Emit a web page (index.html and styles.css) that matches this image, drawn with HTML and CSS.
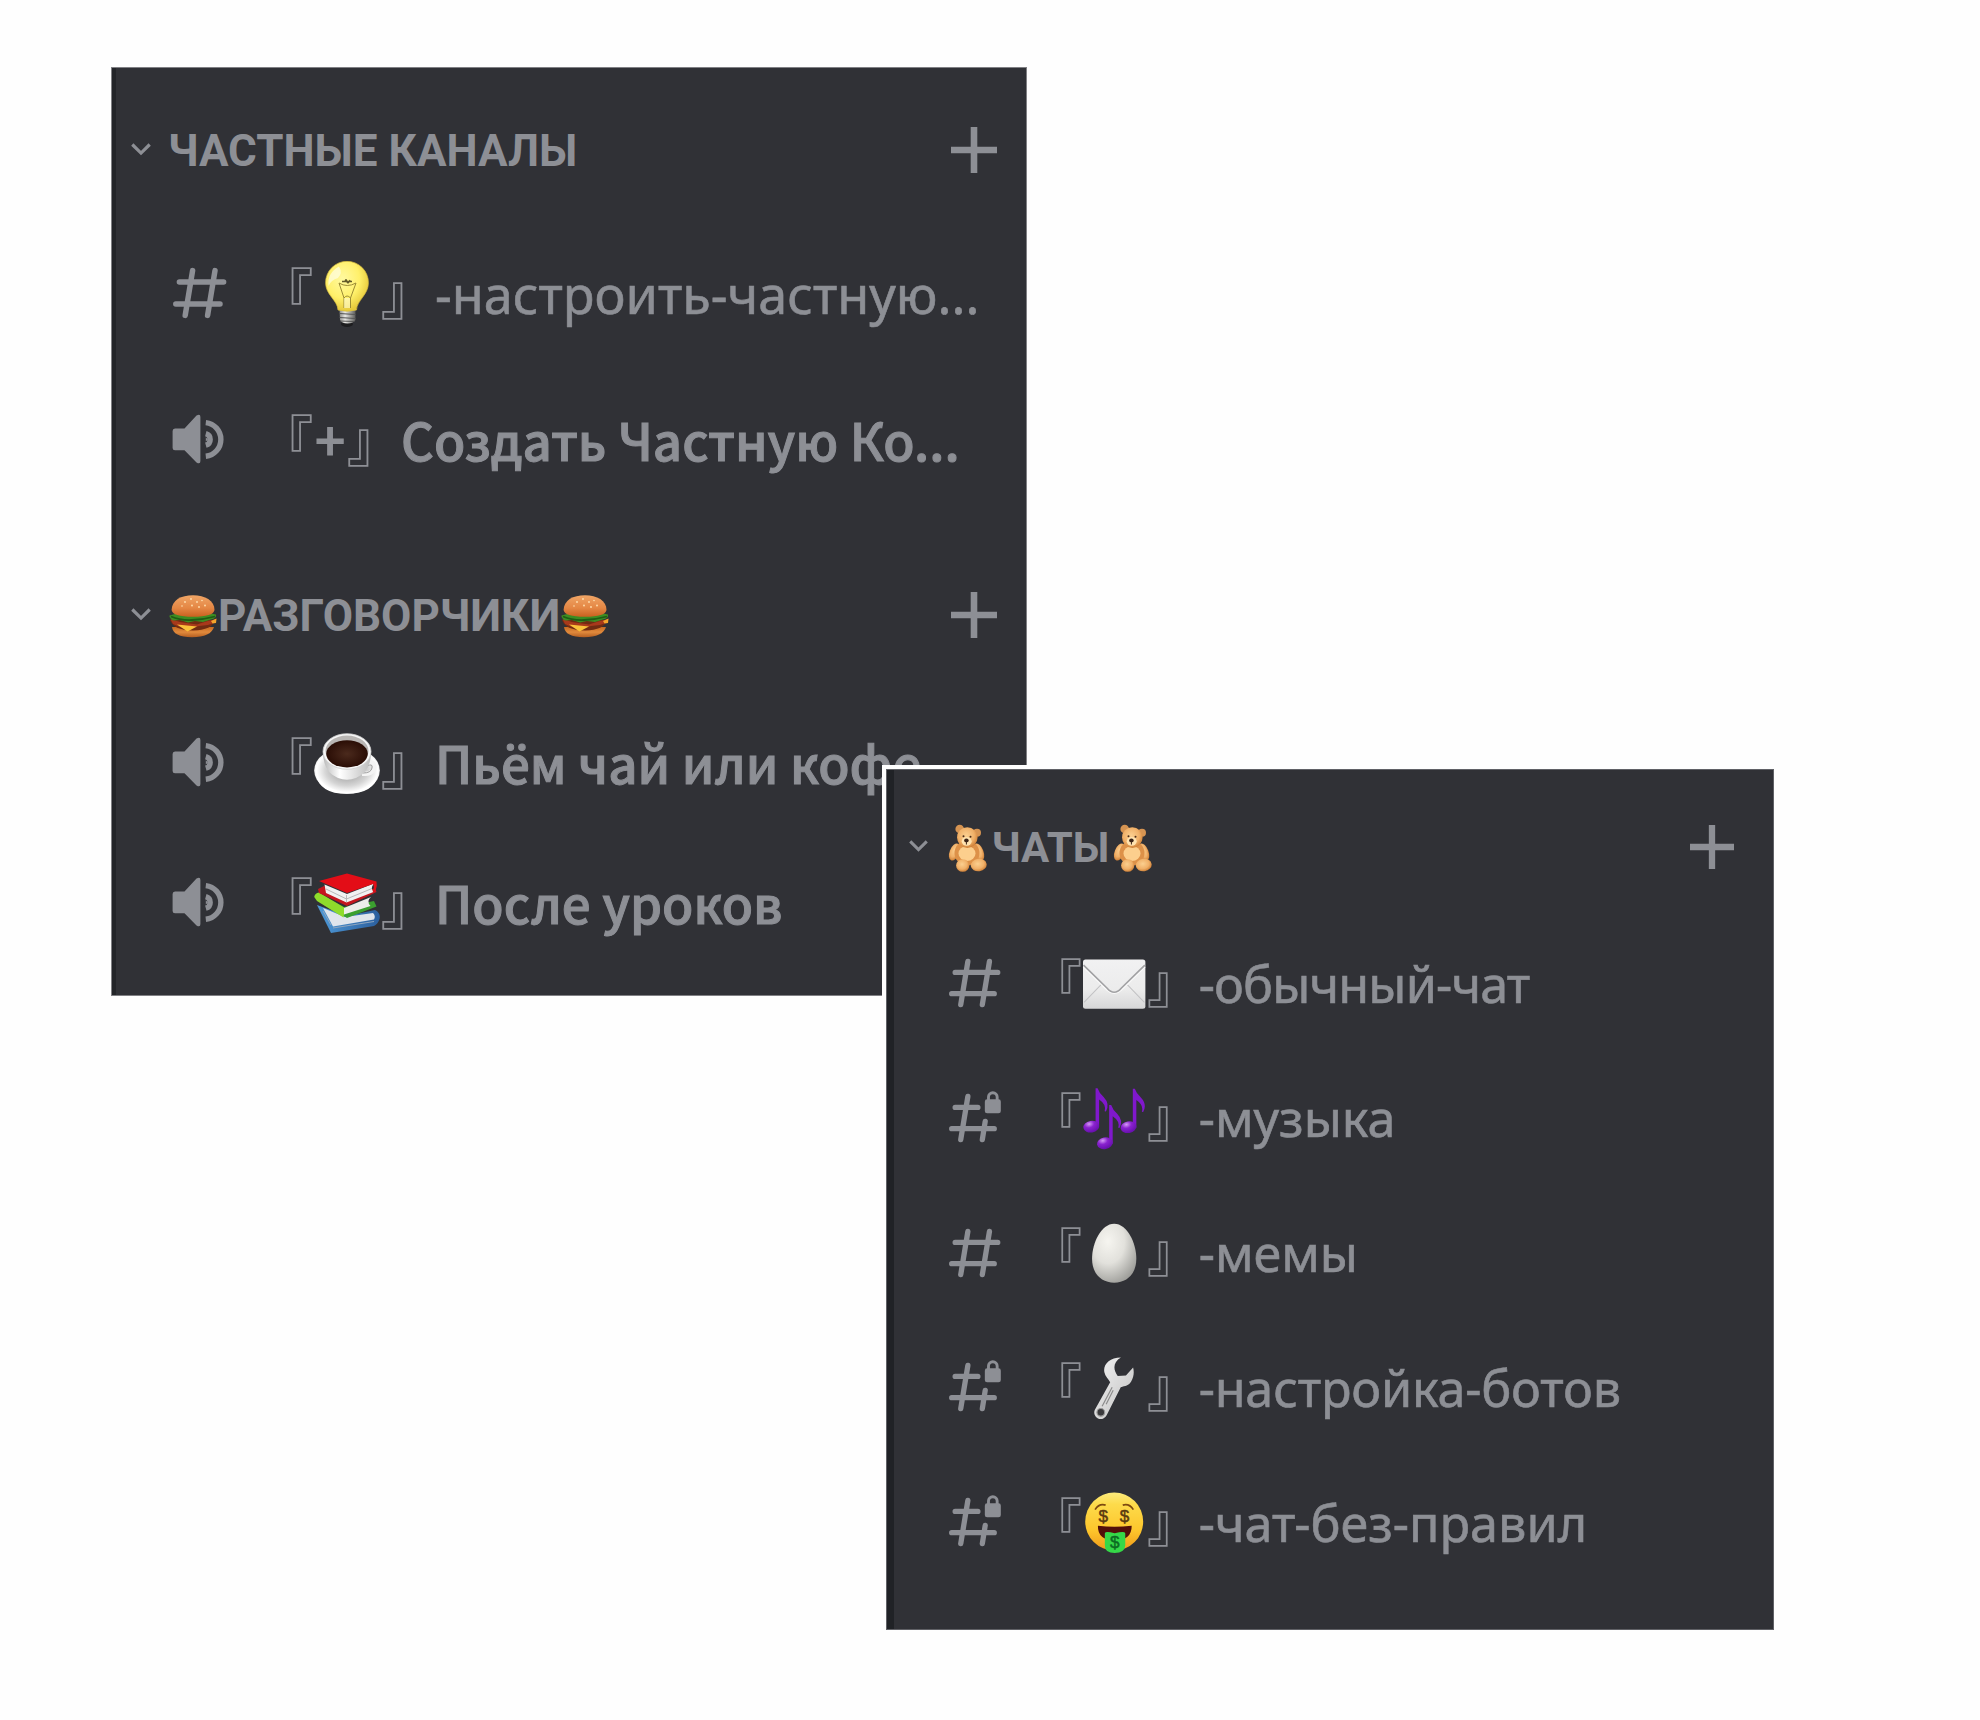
FILE: index.html
```html
<!DOCTYPE html>
<html lang="ru">
<head>
<meta charset="utf-8">
<title>Каналы</title>
<link rel="stylesheet" href="styles.css">
</head>
<body>
<svg class="defs" width="0" height="0" aria-hidden="true">
  <defs>
    <linearGradient id="bun" x1="0" y1="0" x2="0" y2="1"><stop offset="0" stop-color="#f0a566"/><stop offset=".6" stop-color="#e48643"/><stop offset="1" stop-color="#c9601f"/></linearGradient>
    <linearGradient id="bun2" x1="0" y1="0" x2="0" y2="1"><stop offset="0" stop-color="#c76a22"/><stop offset=".5" stop-color="#e08a3c"/><stop offset="1" stop-color="#b45d20"/></linearGradient>
    <radialGradient id="fur" cx=".45" cy=".4" r=".6"><stop offset="0" stop-color="#fbcf8f"/><stop offset=".65" stop-color="#f0b068"/><stop offset="1" stop-color="#cf8138"/></radialGradient>
    <radialGradient id="glass" cx=".4" cy=".35" r=".65"><stop offset="0" stop-color="#fff9a0"/><stop offset=".6" stop-color="#fff06a"/><stop offset="1" stop-color="#e6c93a"/></radialGradient>
    <linearGradient id="metal" x1="0" x2="1"><stop offset="0" stop-color="#8b8b88"/><stop offset=".35" stop-color="#e9e9e6"/><stop offset="1" stop-color="#5c5c5a"/></linearGradient>
    <radialGradient id="saucer" cx=".5" cy=".5" r=".55"><stop offset="0" stop-color="#8f8f8f"/><stop offset=".6" stop-color="#d5d5d5"/><stop offset=".85" stop-color="#fff"/><stop offset="1" stop-color="#d9d9d9"/></radialGradient>
    <linearGradient id="cup" x1="0" x2="1"><stop offset="0" stop-color="#b9b9b9"/><stop offset=".35" stop-color="#fff"/><stop offset="1" stop-color="#bcbcbc"/></linearGradient>
    <radialGradient id="brew"><stop offset="0" stop-color="#4b2a1d"/><stop offset="1" stop-color="#2a0d05"/></radialGradient>
    <linearGradient id="paper" x1="0" y1="0" x2="0" y2="1"><stop offset="0" stop-color="#f1f1f2"/><stop offset=".6" stop-color="#ececec"/><stop offset="1" stop-color="#d6d6d7"/></linearGradient>
    <radialGradient id="note" cx=".4" cy=".25" r=".7"><stop offset="0" stop-color="#d59af5"/><stop offset=".45" stop-color="#8a22cf"/><stop offset="1" stop-color="#6a11b0"/></radialGradient>
    <radialGradient id="shell" cx=".36" cy=".3" r=".75"><stop offset="0" stop-color="#f6f5f0"/><stop offset=".5" stop-color="#e2e1dc"/><stop offset="1" stop-color="#9f9f9b"/></radialGradient>
    <linearGradient id="steel" x1="0" y1="0" x2="1" y2="1"><stop offset="0" stop-color="#f4f4f4"/><stop offset="1" stop-color="#bfbfbf"/></linearGradient>
    <linearGradient id="face" x1="0" y1="0" x2="0" y2="1"><stop offset="0" stop-color="#fdeb7c"/><stop offset=".2" stop-color="#fddb4b"/><stop offset=".65" stop-color="#fdc62c"/><stop offset="1" stop-color="#f09a1a"/></linearGradient>
    <linearGradient id="bluebook" x1="0" x2="1"><stop offset="0" stop-color="#4f9ad8"/><stop offset="1" stop-color="#2b5f9e"/></linearGradient>

    <symbol id="chevron" viewBox="0 0 20 13"><path d="M1.300 1.500 10 10.100 18.700 1.500" fill="none" stroke="currentColor" stroke-width="3.200"/></symbol>
    <symbol id="plus" viewBox="0 0 46 46"><path d="M0 23H46M23 0V46" fill="none" stroke="currentColor" stroke-width="6.6"/></symbol>
    <symbol id="hash" viewBox="0 0 56 52"><path d="M20.6 3.6 13.2 48.4M43 3.6 35.6 48.4M7.4 15H51.6M3.8 37H48" fill="none" stroke="currentColor" stroke-width="5.5" stroke-linecap="round"/></symbol>
    <symbol id="hash-lock" viewBox="0 0 56 52" overflow="visible">
      <path d="M20.6 3.6 13.2 48.4M38.6 29.5 35.6 48.4M7.4 15H31M3.8 37H48" fill="none" stroke="currentColor" stroke-width="5.5" stroke-linecap="round"/>
      <rect x="38.2" y="6.600" width="16.6" height="14.400" rx="2.4" fill="currentColor"/>
      <path d="M42 8V4.200a4.500 4.500 0 0 1 9 0V8" fill="none" stroke="currentColor" stroke-width="3"/>
    </symbol>
    <symbol id="speaker" viewBox="0 0 56 52">
      <path d="M3 15.5H12.5L24.5 2.6Q28.4 .4 28.4 4V48Q28.4 51.600 24.5 49.4L12.5 37.3H3Q.6 37.3.6 35V18Q.6 15.5 3 15.5Z" fill="currentColor"/>
      <path d="M33.8 9.6A16.9 16.9 0 0 1 33.8 43.2M33.8 20.700A5.9 5.9 0 0 1 33.8 32.1" fill="none" stroke="currentColor" stroke-width="5.4"/>
      <path d="M33.8 24.3 36 26.4 33.8 28.5Z" fill="currentColor"/>
    </symbol>

    <symbol id="burger" viewBox="0 0 50 50">
      <path d="M4 36Q5 46 24 46.300Q43 46 46 36Z" fill="url(#bun2)"/>
      <path d="M2 29Q5 39 25 39.500Q44 39 47.500 29Z" fill="#702b12"/>
      <path d="M2.500 28 12 31 29 33.500 38 30.500 48.500 28 47 31.500 40 34 31 35 20 38 12 36 5 33Z" fill="#a8391b"/>
      <path d="M9 33.500 29 35.500 19.500 40.500Z" fill="#fbc13a"/>
      <path d="M43 30 48.500 27.500 48 32 44.500 32.500Z" fill="#f5a52c"/>
      <path d="M1.500 24.500Q25 17 48 23.500Q49 27 43 28.500L35 31 27 30 20 31.500 12 29 5 29.500Q1 27 1.500 24.500Z" fill="#3d8c22"/>
      <path d="M3 25.500Q12 29.500 24 29T47 25.500" fill="none" stroke="#1f5c14" stroke-width="1.800"/>
      <path d="M3.600 19C4 9 13 4.300 25 4.300S46.500 9.500 46.500 19Q45.500 25.800 25 25.800T3.600 19Z" fill="url(#bun)"/>
      <g fill="#ffe0b0"><circle cx="17" cy="11" r=".9"/><circle cx="23" cy="8" r=".9"/><circle cx="29" cy="11" r=".9"/><circle cx="24" cy="14.500" r=".9"/><circle cx="34" cy="9.500" r=".8"/><circle cx="37" cy="14.500" r=".9"/><circle cx="31" cy="16" r=".9"/><circle cx="14" cy="15" r=".8"/></g>
    </symbol>

    <symbol id="bear" viewBox="0 0 48 48">
      <circle cx="15.700" cy="5" r="4.300" fill="#d69452"/><circle cx="33" cy="8.800" r="4" fill="#d69452"/>
      <ellipse cx="10.500" cy="28" rx="4.800" ry="9" transform="rotate(22 10.500 28)" fill="url(#fur)"/>
      <ellipse cx="35" cy="28" rx="4.500" ry="9" transform="rotate(-20 35 28)" fill="url(#fur)"/>
      <ellipse cx="23" cy="29" rx="12.500" ry="12.500" fill="#dd9148"/>
      <ellipse cx="23" cy="29.500" rx="8.500" ry="7.500" fill="#fccf8d"/>
      <circle cx="23.300" cy="13.600" r="10.300" fill="url(#fur)"/>
      <ellipse cx="22.700" cy="17.300" rx="5" ry="4.400" fill="#ffe3b0"/>
      <ellipse cx="22.400" cy="16.400" rx="2.300" ry="1.900" fill="#3a2317"/><path d="M22.400 18V20.500" stroke="#3a2317"/>
      <circle cx="19.500" cy="12.300" r="1" fill="#4a2c18"/><circle cx="26.500" cy="12.800" r="1" fill="#4a2c18"/>
      <ellipse cx="18.700" cy="41.500" rx="6.600" ry="6.300" fill="url(#fur)"/><ellipse cx="34.700" cy="41" rx="8" ry="6.300" transform="rotate(-8 34.700 41)" fill="url(#fur)"/>
    </symbol>

    <symbol id="bulb" viewBox="0 0 66 66">
      <ellipse cx="33" cy="63" rx="6" ry="3" fill="#1d1d1f"/>
      <path d="M25.500 48H41.500V59Q39 62.500 33.500 62.500T26 59Z" fill="url(#metal)"/>
      <path d="M25.500 52.500 41.500 53.500M25.500 56.500 41.500 57.500M26 60 40.500 60.500" stroke="#555" stroke-width="1.200"/>
      <path d="M24 49C23.500 39 11.600 34 11.600 21.700A21.400 21.400 0 0 1 54.400 21.700C54.400 34 43 39 42.500 49Q33 51.500 24 49Z" fill="url(#glass)" stroke="#d8bd3d" stroke-width=".7"/>
      <path d="M30 47V37L25 22M36.500 47V37L42 22M25 22Q33 27 42 22M30 37Q33 33 36.500 37" fill="none" stroke="#9b8b35" stroke-width="1"/>
      <path d="M28 20.500H38M31 20.500Q32 17 33 20.500T36 19" fill="none" stroke="#625a2a" stroke-width="1.300"/>
      <path d="M14.500 25Q13 12 25 5.500 29 12 24 17 17 19 14.500 25Z" fill="#fffde0" opacity=".75"/>
      <path d="M30 37H36V47H30Z" fill="#fffbd0" opacity=".6"/>
    </symbol>

    <symbol id="coffee" viewBox="0 0 66 66">
      <ellipse cx="33" cy="39.500" rx="32.800" ry="23.300" fill="url(#saucer)"/>
      <path d="M2 44Q14 61 33 61T64 44Q60 62.500 33 62.800T2 44Z" fill="#fff"/>
      <path d="M53 33Q61 29 60.500 36T48 43" fill="none" stroke="#f4f4f4" stroke-width="4.200"/>
      <path d="M53 35Q59 32 58 37T49 42" fill="none" stroke="#9c9c9c" stroke-width="1"/>
      <path d="M9 21Q9 41 24 47 33 50.500 42 47 57 41 57 21Z" fill="url(#cup)"/>
      <ellipse cx="33" cy="20.500" rx="24" ry="17.800" fill="#f7f7f7" stroke="#cfcfcf" stroke-width=".8"/>
      <ellipse cx="33" cy="20" rx="21.500" ry="15.500" fill="#b9b6b4"/>
      <ellipse cx="33" cy="22.800" rx="20.800" ry="13.600" fill="url(#brew)"/>
    </symbol>

    <symbol id="books" viewBox="0 0 66 66">
      <path d="M3 34 33 45 61 39Q67 42 65.500 48 64 53 60 55L17 62Z" fill="url(#bluebook)"/>
      <path d="M9 37 19 55.500 60 48.500Q62 45 59 42L31 46Z" fill="#dfe5ec"/>
      <path d="M19 57 60 50.500M17 54 9 40" stroke="#8fa6bf" stroke-width="1"/>
      <path d="M1 27Q-1 24 4 22L30 36 60 30 62.500 35.500 33 47Z" fill="#3ba02f"/>
      <path d="M.300 26Q1 22 5 21.500L31 37 29.500 46.500 3 30Z" fill="#8fdc2b"/>
      <path d="M30 37 57 26Q52 30 56.500 35L30 43.500Z" fill="#eceeea"/>
      <path d="M4 18 10 15 33 28 61 17 62.500 21 33 35 5 22Z" fill="#c4161e"/>
      <path d="M10.500 13.500 33 23 60 12.500Q56 17 59.500 21L32.500 31.500 12 22Z" fill="#f1f1f1"/>
      <path d="M12 18 32.500 28 58 17.500M32.500 24V31" fill="none" stroke="#b9b9b9"/>
      <path d="M5 10 33 2.500 62.500 10.500Q63.500 15 61.500 20L58.500 21.500Q61 16.500 59 13L33 22Z" fill="#e30d17"/>
    </symbol>

    <symbol id="envelope" viewBox="0 0 64 64">
      <rect x="1" y="7.500" width="62" height="49" rx="2.500" fill="url(#paper)"/>
      <path d="M2 50 19 32.500M62 50 45 32.500" stroke="#c2c2c4" stroke-width="1"/>
      <path d="M1.500 14.500 25 37.500Q32 44 39 37.500L62.500 14.500" fill="none" stroke="#fafafa" stroke-width="2"/>
      <path d="M1.500 13 25 36Q32 44 39 36L62.500 13" fill="none" stroke="#a2a2a4" stroke-width="1.700"/>
    </symbol>

    <symbol id="notes" viewBox="0 0 64 64">
      <g id="one-note"><path d="M13.500 1.300H15.500Q17 6 21.500 10 28 17 23.800 24.300L22.500 24Q24.500 17.500 17 12.500V40H13.500Z" fill="#8018cc"/><ellipse cx="9.200" cy="39.400" rx="7.900" ry="5.800" transform="rotate(-10 9.200 39.400)" fill="url(#note)"/></g>
      <use href="#one-note" x="37" y=".5"/><use href="#one-note" x="13.500" y="16.500"/>
    </symbol>

    <symbol id="egg" viewBox="0 0 64 64"><path d="M32 2.700C45 2.700 54 22 54 37.500 54 52.500 44.500 61.300 32 61.300S10 52.500 10 37.500C10 22 19 2.700 32 2.700Z" fill="url(#shell)"/></symbol>

    <symbol id="wrench" viewBox="0 0 64 64">
      <path d="M38.700 1.500C27 1.500 20.500 9 22.300 16.500 23.200 20.500 26 22.500 28 26L12.800 53.500A6.300 6.300 0 0 0 24.500 59L38.500 31C43 29.500 46.500 29.500 49 25 51.500 20.500 52 16 50.800 11.500L43.700 19.500 35.500 20C30.500 13 31 6 38.700 1.500Z" fill="url(#steel)"/>
      <path d="M30 31 20 50M24 48 31 34" stroke="#8c8c8c" stroke-width="1.200"/>
      <circle cx="18.700" cy="56" r="3.800" fill="#3a3a3c" stroke="#999" stroke-width="1.200"/>
    </symbol>

    <symbol id="money" viewBox="0 0 64 64">
      <circle cx="32" cy="30.400" r="28.800" fill="url(#face)"/>
      <path d="M13 18.500Q17 12 23.500 14M51 18.500Q47 12 40.500 14" fill="none" stroke="#7d4a10" stroke-width="1.700"/>
      <path d="M15.800 34.600Q32 36.500 49.400 34.600 49.500 49 32.500 49T15.800 34.600Z" fill="#520f0a"/>
      <path d="M22.700 42Q23 39.500 32.500 42 42.500 39.500 43 42V54Q42.500 61.700 32.500 61.700T22.700 54Z" fill="#35d848"/>
      <g class="dollar"><text x="21.200" y="30.600">$</text><text x="42.300" y="30.600">$</text><text class="dollar-green" x="32.500" y="56.600">$</text></g>
    </symbol>
  </defs>
</svg>

<main class="canvas">
  <section class="panel panel-voice">
    <header class="category">
      <svg class="chevron"><use href="#chevron"/></svg>
      <h2 class="title">ЧАСТНЫЕ КАНАЛЫ</h2>
      <svg class="plus"><use href="#plus"/></svg>
    </header>
    <div class="channel first">
      <svg class="icon"><use href="#hash"/></svg>
      <div class="name"><span class="open">『</span><svg class="emoji"><use href="#bulb"/></svg><span class="close">』</span><span class="label">-настроить-частную...</span></div>
    </div>
    <div class="channel voice second">
      <svg class="icon"><use href="#speaker"/></svg>
      <div class="name"><span class="open">『</span><span class="sign">+</span><span class="close">』</span><span class="label">Создать Частную Ко...</span></div>
    </div>
    <header class="category talk">
      <svg class="chevron"><use href="#chevron"/></svg>
      <h2 class="title"><svg class="mini"><use href="#burger"/></svg>РАЗГОВОРЧИКИ<svg class="mini"><use href="#burger"/></svg></h2>
      <svg class="plus"><use href="#plus"/></svg>
    </header>
    <div class="channel voice third">
      <svg class="icon"><use href="#speaker"/></svg>
      <div class="name"><span class="open">『</span><svg class="emoji"><use href="#coffee"/></svg><span class="close">』</span><span class="label">Пьём чай или кофе</span></div>
    </div>
    <div class="channel voice fourth">
      <svg class="icon"><use href="#speaker"/></svg>
      <div class="name"><span class="open">『</span><svg class="emoji"><use href="#books"/></svg><span class="close">』</span><span class="label">После уроков</span></div>
    </div>
  </section>

  <section class="panel panel-chats">
    <header class="category">
      <svg class="chevron"><use href="#chevron"/></svg>
      <h2 class="title"><svg class="mini"><use href="#bear"/></svg>ЧАТЫ<svg class="mini"><use href="#bear"/></svg></h2>
      <svg class="plus"><use href="#plus"/></svg>
    </header>
    <div class="list">
      <div class="channel">
        <svg class="icon"><use href="#hash"/></svg>
        <div class="name"><span class="open">『</span><svg class="emoji"><use href="#envelope"/></svg><span class="close">』</span><span class="label tight">-обычный-чат</span></div>
      </div>
      <div class="channel">
        <svg class="icon"><use href="#hash-lock"/></svg>
        <div class="name"><span class="open">『</span><svg class="emoji"><use href="#notes"/></svg><span class="close">』</span><span class="label">-музыка</span></div>
      </div>
      <div class="channel">
        <svg class="icon"><use href="#hash"/></svg>
        <div class="name"><span class="open">『</span><svg class="emoji"><use href="#egg"/></svg><span class="close">』</span><span class="label">-мемы</span></div>
      </div>
      <div class="channel">
        <svg class="icon"><use href="#hash-lock"/></svg>
        <div class="name"><span class="open">『</span><svg class="emoji"><use href="#wrench"/></svg><span class="close">』</span><span class="label snug">-настройка-ботов</span></div>
      </div>
      <div class="channel">
        <svg class="icon"><use href="#hash-lock"/></svg>
        <div class="name"><span class="open">『</span><svg class="emoji"><use href="#money"/></svg><span class="close">』</span><span class="label">-чат-без-правил</span></div>
      </div>
    </div>
  </section>
</main>
</body>
</html>
```
FILE: styles.css
```css
* { box-sizing: border-box; }

body {
  margin: 0;
  background: #fefefe;
}

.defs { position: absolute; }

.canvas {
  position: relative;
  width: 1980px;
  height: 1720px;
  overflow: hidden;
}

/* Two overlapping windows on a blank canvas */
.panel {
  position: absolute;
  background: #303136;
  border: 1px solid #808084;
  color: #8d8f95;
}

.panel-voice {
  left: 111px;
  top: 67px;
  width: 916px;
  height: 929px;
  padding-top: 52px;
  box-shadow: inset 4px 0 0 #232529;
}

.panel-chats {
  left: 886px;
  top: 769px;
  width: 888px;
  height: 861px;
  padding-top: 47px;
  border-color: #606166;
  box-shadow: 0 0 0 4px #fefefe, inset 7px 0 0 #202226;
}

/* Category headers */
.category {
  display: flex;
  align-items: center;
  height: 60px;
  padding: 0 29px 0 19px;
}

.category.talk { margin-top: 106px; }

.chevron {
  width: 20px;
  height: 13px;
  margin: -2px 17px 0 0;
}

.title {
  display: flex;
  align-items: center;
  margin: 0;
  padding-top: 1px;
  font: 700 44px/60px Roboto, sans-serif;
  white-space: nowrap;
}

.mini {
  width: 50px;
  height: 50px;
}

.plus {
  width: 46px;
  height: 46px;
  margin-left: auto;
}

/* Channel rows */
.channel {
  display: flex;
  align-items: center;
  height: 80px;
  padding-left: 60px;
}

.channel.first { margin-top: 73px; }
.channel.second { margin-top: 66px; }
.channel.third { margin-top: 77px; }
.channel.fourth { margin-top: 60px; }

.icon {
  flex: none;
  width: 56px;
  height: 52px;
  margin-right: 31px;
  overflow: visible;
}

.name {
  display: flex;
  align-items: baseline;
  height: 80px;
  margin-top: -5px;
  line-height: 80px;
  white-space: nowrap;
}

.voice .name { margin-top: -2px; }
.fourth .name { margin-top: -3px; }

.open,
.close {
  width: 54.5px;
  font-family: "Noto Sans CJK JP", sans-serif;
  font-size: 54.5px;
}

.emoji {
  align-self: center;
  width: 66px;
  height: 66px;
  margin: 6px 1px 0 0;
}

.label {
  font-family: "Noto Sans", sans-serif;
  font-size: 52.2px;
  -webkit-text-stroke: 0.6px currentColor;
}

.voice .label,
.sign {
  font-family: "Noto Sans CJK JP", sans-serif;
  font-size: 51px;
  font-weight: 500;
  -webkit-text-stroke: 1px currentColor;
}

.sign {
  width: 33px;
  text-align: center;
  font-size: 53px;
}

/* Chats window is drawn slightly smaller */
.panel-chats .category { padding: 0 39px 0 22px; }
.panel-chats .chevron { width: 19px; height: 12.4px; margin-right: 15.5px; }
.panel-chats .title { font-size: 42px; }
.panel-chats .mini { width: 48px; height: 48px; }
.panel-chats .plus { width: 44px; height: 44px; }

.list {
  display: flex;
  flex-direction: column;
  gap: 54.8px;
  margin-top: 66px;
}

.panel-chats .channel { padding-left: 60.5px; }
.panel-chats .icon { width: 54px; height: 50.1px; margin-right: 28.8px; }
.panel-chats .open,
.panel-chats .close { width: 52px; font-size: 52px; }
.panel-chats .emoji { width: 64.4px; height: 64.4px; margin: 7px 0 0; }
.panel-chats .label { font-size: 50.3px; }
.panel-chats .label.tight { letter-spacing: -0.85px; }
.panel-chats .label.snug { letter-spacing: -0.2px; }

.dollar {
  font: 400 17px "Liberation Sans", sans-serif;
  text-anchor: middle;
  fill: #5a3a10;
  stroke: #5a3a10;
  stroke-width: 0.5px;
}

.dollar-green { fill: #0b6b22; stroke: #0b6b22; }
```
